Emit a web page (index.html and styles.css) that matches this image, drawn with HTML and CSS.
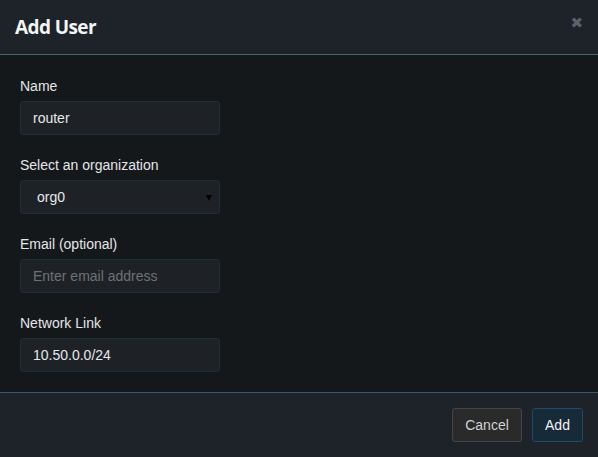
FILE: index.html
```html
<!DOCTYPE html>
<html>
<head>
<meta charset="utf-8">
<link rel="stylesheet" href="styles.css">
</head>
<body>
<div class="modal">
  <div class="modal-header">
    <h4 class="title">Add User</h4>
    <span class="close">&#x2716;</span>
  </div>
  <div class="modal-body">
    <div class="group">
      <label class="label">Name</label>
      <input class="input" type="text" value="router">
    </div>
    <div class="group">
      <label class="label">Select an organization</label>
      <div class="select">
        <span class="select-text">org0</span>
        <span class="caret"></span>
      </div>
    </div>
    <div class="group">
      <label class="label">Email (optional)</label>
      <input class="input" type="text" placeholder="Enter email address">
    </div>
    <div class="group last">
      <label class="label">Network Link</label>
      <input class="input" type="text" value="10.50.0.0/24">
    </div>
  </div>
  <div class="modal-footer">
    <button class="btn btn-cancel">Cancel</button>
    <button class="btn btn-add">Add</button>
  </div>
</div>
</body>
</html>
```

FILE: styles.css
```css
html, body {
  margin: 0;
  padding: 0;
  background: #15181b;
  width: 598px;
  height: 457px;
  overflow: hidden;
}
.modal {
  display: flex;
  flex-direction: column;
  height: 457px;
  font-family: "Liberation Sans", Arial, sans-serif;
  font-size: 14px;
  color: #e4e6e8;
}
.modal-header {
  height: 54px;
  background: #1e232a;
  border-bottom: 1px solid #4b6274;
  display: flex;
  align-items: center;
  justify-content: space-between;
  padding: 0 15px;
  box-sizing: content-box;
}
.title {
  margin: 0;
  font-family: "Open Sans", sans-serif;
  font-weight: 700;
  font-size: 19px;
  color: #f2f4f6;
  letter-spacing: -0.6px;
}
.close {
  font-size: 15px;
  color: #5b626c;
  margin-top: -8px;
  margin-right: 0;
  font-family: "DejaVu Sans", sans-serif;
}
.modal-body {
  flex: 1;
  background: #15181b;
  padding: 21px 20px 20px;
}
.group {
  display: flex;
  flex-direction: column;
  margin-bottom: 20px;
}
.group.last { margin-bottom: 0; }
.label {
  line-height: 20px;
  margin-bottom: 5px;
  color: #e4e6e8;
}
.input, .select {
  width: 200px;
  height: 34px;
  box-sizing: border-box;
  background: #1e2227;
  border: 1px solid #1d2e3c;
  border-radius: 3px;
  font-family: "Liberation Sans", Arial, sans-serif;
  font-size: 14px;
  color: #e6e8ea;
  outline: none;
}
.input {
  padding: 0 12px;
}
.input::placeholder { color: #6c7278; }
.select {
  display: flex;
  align-items: center;
  justify-content: space-between;
  padding: 0 7px 0 0;
}
.select-text {
  padding-left: 16px;
}
.caret {
  width: 0;
  height: 0;
  border-left: 3px solid transparent;
  border-right: 3px solid transparent;
  border-top: 6px solid #000;
  margin-top: 1px;
}
.modal-footer {
  background: #1e232a;
  border-top: 1px solid #3f5668;
  height: 65px;
  box-sizing: border-box;
  display: flex;
  justify-content: flex-end;
  align-items: flex-start;
  padding: 15px 15px 0 0;
  gap: 10px;
}
.btn {
  height: 34px;
  box-sizing: border-box;
  border-radius: 3px;
  font-family: "Liberation Sans", Arial, sans-serif;
  font-size: 14px;
  padding: 0 12px;
  cursor: pointer;
}
.btn-cancel {
  width: 70px;
  background: #2a2a2a;
  border: 1px solid #454545;
  color: #d0d2d4;
}
.btn-add {
  width: 51px;
  background: #172a38;
  border: 1px solid #1f4a68;
  color: #f0f2f4;
}
```
